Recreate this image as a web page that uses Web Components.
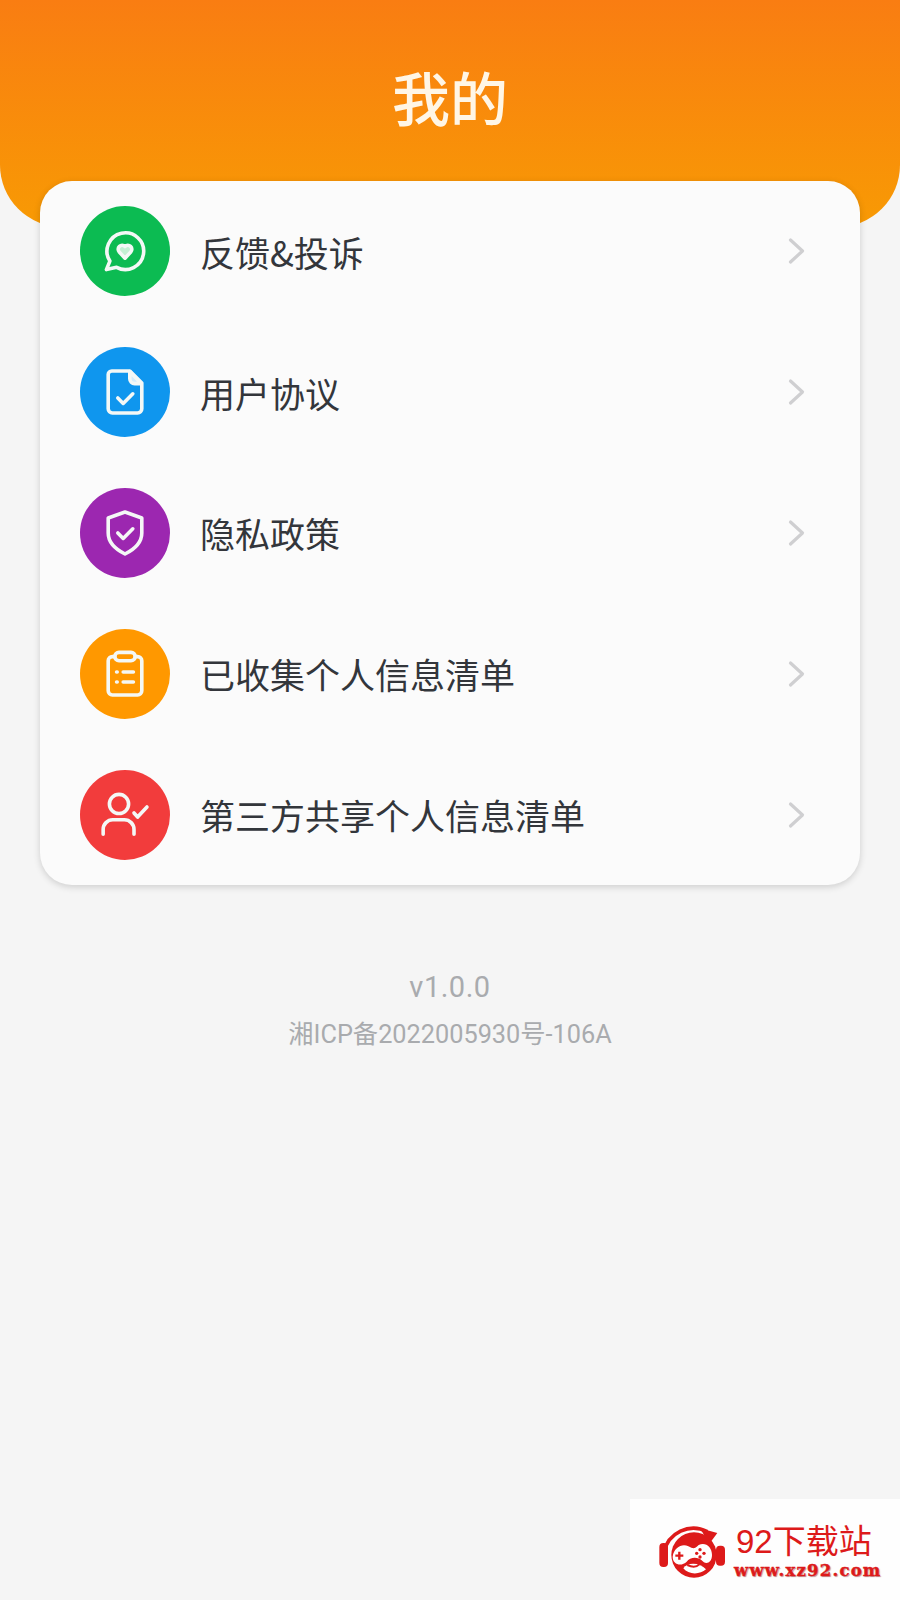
<!DOCTYPE html>
<html lang="zh">
<head>
<meta charset="utf-8">
<title>我的</title>
<style>
    html, body { margin: 0; padding: 0; }
    body {
        width: 900px;
        height: 1600px;
        overflow: hidden;
        background: #f5f5f5;
        font-family: 'Noto Sans CJK SC', 'Roboto', sans-serif;
    }
</style>
</head>
<body>
<my-page>
    <my-header slot="header">我的</my-header>
    <menu-card slot="card">
        <menu-row color="#0cbb52" icon="chat">反馈&amp;投诉</menu-row>
        <menu-row color="#0f96ee" icon="doc">用户协议</menu-row>
        <menu-row color="#9c27b0" icon="shield">隐私政策</menu-row>
        <menu-row color="#ff9800" icon="list">已收集个人信息清单</menu-row>
        <menu-row color="#f23c3c" icon="user">第三方共享个人信息清单</menu-row>
    </menu-card>
    <app-footer slot="footer" version="v1.0.0" icp="湘ICP备2022005930号-106A"></app-footer>
    <site-mark slot="mark"></site-mark>
</my-page>

<script>
// Icons are all drawn on a 40x40 box, white stroke
const ICONS = {
    chat: `<path d="M4.500 35.500 L7.400 28.400 A15.300 15.300 0 1 1 13 33.600 Z"/>
           <path d="M20 26 L15.200 20.800 A3.200 3.200 0 0 1 20 16.300 A3.200 3.200 0 0 1 24.800 20.800 Z" fill="#c4f0d4" stroke-width="3"/>`,
    doc: `<path d="M9 2.500 H24 L34 12.500 V34 A3.500 3.500 0 0 1 30.500 37.500 H9.500 A3.500 3.500 0 0 1 6 34 V5.500 A3 3 0 0 1 9 2.500 Z"/>
          <path d="M24 3 V9 A4 4 0 0 0 28 13 H33.500 Z" fill="#d5ecfb"/>
          <path d="M14 25 L18.500 29.500 L26.500 21.500"/>`,
    shield: `<path d="M20 2.500 L34 7.500 V20 C34 28 27 34 20 37.500 C13 34 6 28 6 20 V7.500 Z"/>
             <path d="M14 20 L18.500 24.500 L26.500 16.500"/>`,
    list: `<path d="M11.500 5.500 H9.500 A3.500 3.500 0 0 0 6 9 V34 A3.500 3.500 0 0 0 9.500 37.500 H30.500 A3.500 3.500 0 0 0 34 34 V9 A3.500 3.500 0 0 0 30.500 5.500 H28.500"/>
           <rect x="11.500" y="2" width="17" height="7" rx="3.500"/>
           <path d="M18.500 18.300 H27 M18.500 26.700 H27"/>
           <path d="M13 18.300 H13.500 M13 26.700 H13.500"/>`,
    user: `<circle cx="15" cy="10.800" r="8"/>
           <path d="M1.800 36 V32 A8 8 0 0 1 9.800 24 H19.500 A8 8 0 0 1 27.500 32 V36"/>
           <path d="M27.500 18.300 L30.500 21.700 L38.300 13.300"/>`
};

class MyPage extends HTMLElement {
    constructor() {
        super();
        const shadow = this.attachShadow({ mode: 'open' });
        shadow.innerHTML = `
            <style>
                :host { display: block; position: relative; width: 900px; height: 1600px; }
                .content { display: flex; flex-direction: column; align-items: center; margin-top: -46px; }
                ::slotted([slot="mark"]) { position: absolute; right: 0; bottom: 0; }
            </style>
            <slot name="header"></slot>
            <div class="content">
                <slot name="card"></slot>
                <slot name="footer"></slot>
            </div>
            <slot name="mark"></slot>
        `;
    }
}

class MyHeader extends HTMLElement {
    constructor() {
        super();
        const shadow = this.attachShadow({ mode: 'open' });
        shadow.innerHTML = `
            <style>
                :host {
                    display: block;
                    height: 227px;
                    box-sizing: border-box;
                    padding-top: 57px;
                    text-align: center;
                    background: linear-gradient(180deg, #f97d12 0%, #f89a04 100%);
                    border-radius: 0 0 62px 62px;
                    color: #fff6e6;
                    font-size: 58px;
                    font-weight: 500;
                    line-height: 78px;
                }
            </style>
            <slot></slot>
        `;
    }
}

class MenuCard extends HTMLElement {
    constructor() {
        super();
        const shadow = this.attachShadow({ mode: 'open' });
        shadow.innerHTML = `
            <style>
                :host {
                    display: flex;
                    flex-direction: column;
                    position: relative;
                    box-sizing: border-box;
                    width: 820px;
                    height: 704px;
                    background: #fbfbfb;
                    border-radius: 32px;
                    box-shadow: 0 2px 7px rgba(0, 0, 0, 0.16);
                }
            </style>
            <slot></slot>
        `;
    }
}

class MenuRow extends HTMLElement {
    constructor() {
        super();
        const shadow = this.attachShadow({ mode: 'open' });
        const color = this.getAttribute('color');
        const icon = ICONS[this.getAttribute('icon')];
        shadow.innerHTML = `
            <style>
                :host {
                    flex: 1;
                    display: flex;
                    align-items: center;
                    padding: 0 54px 0 40px;
                    color: #33363b;
                    font-size: 35px;
                }
                .badge {
                    width: 90px;
                    height: 90px;
                    border-radius: 50%;
                    background: var(--badge);
                    display: flex;
                    align-items: center;
                    justify-content: center;
                    flex: none;
                    margin-right: 30px;
                }
                .badge svg { width: 48px; height: 48px; overflow: visible; }
                .label { flex: 1; }
                .chev { width: 18px; height: 28px; flex: none; }
            </style>
            <div class="badge" style="--badge:${color}">
                <svg viewBox="0 0 40 40" fill="none" stroke="#f4f8f6" stroke-width="3" stroke-linecap="round" stroke-linejoin="round">${icon}</svg>
            </div>
            <span class="label"><slot></slot></span>
            <svg class="chev" viewBox="0 0 18 28" fill="none" stroke="#cfcfd1" stroke-width="3.200" stroke-linecap="round" stroke-linejoin="round">
                <path d="M2.500 3 L14.500 14 L2.500 25"/>
            </svg>
        `;
    }
}

class AppFooter extends HTMLElement {
    constructor() {
        super();
        const shadow = this.attachShadow({ mode: 'open' });
        shadow.innerHTML = `
            <style>
                :host {
                    display: flex;
                    flex-direction: column;
                    align-items: center;
                    margin-top: 80px;
                    color: #a9abae;
                    font-family: 'Roboto', 'Noto Sans CJK SC', sans-serif;
                }
                .ver { font-size: 29px; line-height: 44px; letter-spacing: 0.5px; }
                .icp { font-size: 25.300px; line-height: 36px; margin-top: 8px; }
            </style>
            <div class="ver">${this.getAttribute('version')}</div>
            <div class="icp">${this.getAttribute('icp')}</div>
        `;
    }
}

class SiteMark extends HTMLElement {
    constructor() {
        super();
        const shadow = this.attachShadow({ mode: 'open' });
        shadow.innerHTML = `
            <style>
                :host {
                    display: flex;
                    align-items: center;
                    box-sizing: border-box;
                    width: 270px;
                    height: 101px;
                    padding: 0 0 0 20px;
                    gap: 6px;
                    background: #fefefe;
                }
                svg { width: 80px; height: 70px; flex: none; }
                .words { display: flex; flex-direction: column; color: #dd1a1a; margin-top: 4px; }
                .name { font-size: 33px; line-height: 38px; font-family: 'Liberation Sans', 'Noto Sans CJK SC', sans-serif; }
                .url {
                    font-family: 'DejaVu Serif', 'Liberation Serif', serif;
                    font-weight: 700;
                    font-size: 16.500px;
                    line-height: 20px;
                    letter-spacing: 1.200px;
                    margin-left: -2px;
                    -webkit-text-stroke: 0.400px #dd1a1a;
                    text-shadow: 1px 1px 1px rgba(120, 40, 40, 0.5);
                }
            </style>
            <svg viewBox="0 0 240 210">
                <path d="M42 112 A90 90 0 0 1 172 50" fill="none" stroke="#dd1a1a" stroke-width="11"/>
                <path d="M150 40 L202 54 L178 86 Z" fill="#dd1a1a"/>
                <rect x="28" y="84" width="26" height="72" rx="12" fill="#dd1a1a"/>
                <rect x="198" y="92" width="27" height="60" rx="12" fill="#dd1a1a"/>
                <circle cx="132" cy="120" r="68" fill="#dd1a1a"/>
                <path d="M68 125 C72 96 98 84 115 94 C130 101 132 104 146 90 C166 80 186 95 186 120 C186 145 166 150 155 136 C145 125 120 125 110 140 C95 155 68 150 68 125 Z" fill="#fff"/>
                <path d="M76 122 H100 M88 110 V134" stroke="#dd1a1a" stroke-width="7"/>
                <circle cx="150" cy="104" r="5" fill="#dd1a1a"/>
                <circle cx="162" cy="115" r="5" fill="#dd1a1a"/>
                <circle cx="140" cy="115" r="5" fill="#dd1a1a"/>
                <circle cx="150" cy="126" r="5" fill="#dd1a1a"/>
                <path d="M100 160 C112 140 150 142 168 163 C150 180 115 180 100 160 Z" fill="#fff"/>
                <path d="M112 150 C125 156 140 156 148 148" fill="none" stroke="#dd1a1a" stroke-width="6"/>
            </svg>
            <div class="words">
                <div class="name">92下载站</div>
                <div class="url">www.xz92.com</div>
            </div>
        `;
    }
}

customElements.define('my-page', MyPage);
customElements.define('my-header', MyHeader);
customElements.define('menu-card', MenuCard);
customElements.define('menu-row', MenuRow);
customElements.define('app-footer', AppFooter);
customElements.define('site-mark', SiteMark);
</script>
</body>
</html>
